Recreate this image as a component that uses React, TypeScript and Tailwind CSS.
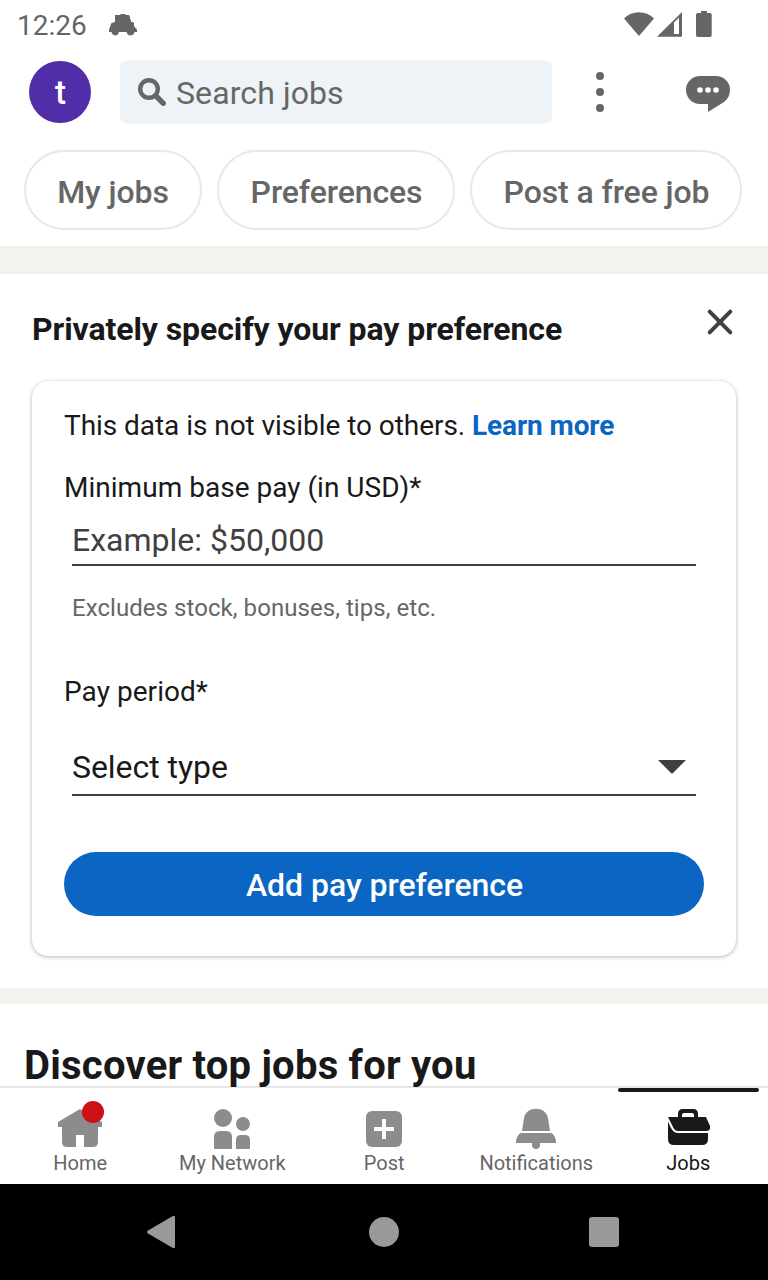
import type { ReactNode } from "react";

function StatusBar() {
  return (
    <div className="flex h-12 items-center pl-[17px] pr-[52px] text-[#666666]">
      <span className="mt-[3px] text-[28px] leading-8">12:26</span>
      <svg className="ml-[22px] h-6 w-7" viewBox="0 0 28 24" fill="currentColor">
        <path d="M6 3h5l1-1h4l1 1h3l1 2v2l1 1v2h2l1 1v3l1 1v1h1l1 2v2h-2.500q-.5 3-4 3.500-3 0-4-3.500H10q-1 3.500-4 3.500-3-.5-3.500-3.500H0v-2.500L2.500 11 6 10z" />
      </svg>
      <svg className="ml-auto h-8 w-[92px]" viewBox="0 0 92 32" fill="currentColor">
        <path d="M15 28 0 10.500C8 2 22 2 30 10.500z" />
        <path fillRule="evenodd" d="M33 28.700 58 4v24.700zM50 14.500v11.500h5V9.500z" />
        <path d="M77 3h6v2h3q1.700 0 1.700 1.700V27.300q0 1.700-1.700 1.700H73.700Q72 29 72 27.300V6.700Q72 5 73.700 5H77z" />
      </svg>
    </div>
  );
}

function Header() {
  return (
    <header className="flex h-[102px] items-start pt-3">
      <div className="ml-[29px] mt-px flex size-[62px] items-center justify-center rounded-full bg-[#512da8] pl-px text-[33px] font-medium leading-none text-white">
        <span>t</span>
      </div>
      <div className="ml-[29px] flex h-16 w-[432px] items-center rounded-lg bg-[#edf3f7] pl-[18px] text-[#666666]">
        <svg className="size-7" viewBox="0 0 28 28" fill="none" stroke="currentColor">
          <circle cx="11" cy="11" r="8.800" strokeWidth="4.400" />
          <path d="m17.500 17.500 7.800 7.800" strokeWidth="5.400" strokeLinecap="round" />
        </svg>
        <span className="ml-[10px] mt-[2px] text-[32px] leading-10 tracking-[0.1px]">Search jobs</span>
      </div>
      <svg className="ml-11 mt-3 h-10 w-2" viewBox="0 0 8 40" fill="#666666">
        <circle cx="4" cy="4" r="4" />
        <circle cx="4" cy="20" r="4" />
        <circle cx="4" cy="36" r="4" />
      </svg>
      <svg className="ml-[82px] mt-4 h-9 w-11" viewBox="0 0 44 36">
        <path d="M14 0h16a14 14 0 0 1 14 14c0 5-2 9-6 12L22 36v-8h-8a14 14 0 0 1 0-28z" fill="#666666" />
        <g fill="#fff">
          <circle cx="14" cy="14" r="2.800" />
          <circle cx="22" cy="14" r="2.800" />
          <circle cx="30" cy="14" r="2.800" />
        </g>
      </svg>
    </header>
  );
}

function Chip({ children, className }: { children: ReactNode; className: string }) {
  return (
    <button
      className={`flex h-20 shrink-0 items-center justify-center rounded-full border-2 border-[#e8e8e8] pt-1 text-[32px] font-medium leading-10 tracking-[-0.1px] text-[#666666] ${className}`}
    >
      {children}
    </button>
  );
}

function PayCard() {
  return (
    <section className="h-[714px] px-8">
      <div className="flex h-[107px] items-start justify-between">
        <h2 className="mt-[35px] text-[32px] font-bold leading-10 tracking-[-0.08px] text-[#191919]">
          Privately specify your pay preference
        </h2>
        <svg className="mr-1 mt-9 size-6 overflow-visible" viewBox="0 0 24 24" fill="none" stroke="#404040" strokeWidth="4">
          <path d="m1.700 1.700 20.600 20.600M22.300 1.700 1.700 22.300" strokeLinecap="round" />
        </svg>
      </div>
      <div className="h-[575px] rounded-2xl px-8 pt-[29px] text-[#191919] shadow-[0_1px_4px_rgba(0,0,0,0.28),0_0_1px_rgba(0,0,0,0.12)]">
        <p className="text-[28px] leading-8 tracking-[-0.05px]">
          This data is not visible to others.{" "}
          <a className="font-bold tracking-[-0.12px] text-[#0a66c2]">Learn more</a>
        </p>
        <label className="mt-[30px] block text-[28px] leading-8 tracking-[0.02px]">Minimum base pay (in USD)*</label>
        <div className="mx-2 mt-4 h-[46px] border-b-2 border-[#404040] text-[32px] leading-10 text-[#404040]">
          Example: $50,000
        </div>
        <p className="mx-2 mt-[26px] text-2xl leading-8 tracking-[0.06px] text-[#666666]">
          Excludes stock, bonuses, tips, etc.
        </p>
        <label className="mt-[52px] block text-[28px] leading-8 tracking-[0.05px]">Pay period*</label>
        <div className="mx-2 mt-[39px] flex h-[49px] justify-between border-b-2 border-[#404040] pr-[10px]">
          <span className="text-[32px] leading-10 tracking-[-0.05px]">Select type</span>
          <svg className="mt-[13px] h-[14px] w-7" viewBox="0 0 28 14" fill="#404040">
            <path d="M0 0h28L14 14z" />
          </svg>
        </div>
        <button className="mt-14 flex h-16 w-full items-center justify-center rounded-full bg-[#0a66c2] pl-px pt-[2px] text-[32px] font-medium leading-10 tracking-[-0.04px] text-white">
          Add pay preference
        </button>
      </div>
    </section>
  );
}

function NavItem({ label, active = false, children }: { label: string; active?: boolean; children: ReactNode }) {
  return (
    <div className={`flex w-[152px] flex-col items-center ${active ? "text-[#191919]" : "text-[#666666]"}`}>
      <div className={`h-1 w-[141px] rounded-sm ${active ? "bg-[#191919]" : ""}`} />
      <svg className={`mt-2 h-[52px] w-12 ${active ? "text-[#191919]" : "text-[#8c8c8c]"}`} viewBox="0 0 48 52" fill="currentColor">
        {children}
      </svg>
      <span className="-mt-px pl-[0.5px] text-xl leading-6">{label}</span>
    </div>
  );
}

function BottomNav() {
  return (
    <nav className="relative flex h-24 shrink-0 justify-center bg-white">
      <NavItem label="Home">
        <path d="M24 9 46 22v5h-4v15q0 5-5 5h-9V35h-8v12h-9q-5 0-5-5V27H2v-5z" />
        <circle cx="37" cy="12" r="11" fill="#cc1016" />
      </NavItem>
      <NavItem label="My Network">
        <circle cx="15" cy="18" r="9" />
        <circle cx="35" cy="24" r="7" />
        <path d="M6 49V37q0-6 6-6h6q6 0 6 6v12zM28 49V40q0-5 5-5h4q5 0 5 5v9z" />
      </NavItem>
      <NavItem label="Post">
        <rect x="6" y="11" width="36" height="36" rx="6" />
        <path d="M24 19v20M14 29h20" stroke="#fff" strokeWidth="4" />
      </NavItem>
      <NavItem label="Notifications">
        <path d="M10 31 12 18C14 5.500 34 5.500 36 18l2 13zM8.500 33h31q4.500 3 4.500 10h-16v2a4 4 0 0 1-8 0v-2H4q0-7 4.500-10z" />
      </NavItem>
      <NavItem label="Jobs" active>
        <path fillRule="evenodd" d="M14 17v-3q0-5 5-5h10q5 0 5 5v3h8l4 9q1 5-4 5H14q-3 0-4.500-3L4 17zM18 17h12v-2q0-2-2-2h-8q-2 0-2 2z" />
        <path d="M4 21.500 7 28q2.500 5 7 5h30v6q0 6-6 6H10q-6 0-6-6z" />
      </NavItem>
    </nav>
  );
}

function SystemNav() {
  return (
    <div className="flex h-24 shrink-0 items-center bg-black pl-[147px] pr-[149px] text-[#999999]">
      <svg className="h-8 w-7" viewBox="0 0 28 32" fill="currentColor">
        <path d="M1 14.500 25 .5q3-1.500 3 1v29q0 2.500-3 1l-24-14q-2-1.500 0-3z" />
      </svg>
      <div className="ml-[194px] size-[30px] rounded-full bg-[#999999]" />
      <div className="ml-auto size-[30px] rounded-[3px] bg-[#999999]" />
    </div>
  );
}

export default function App() {
  return (
    <div className="flex h-[1280px] w-[768px] flex-col overflow-hidden bg-white font-['Roboto',sans-serif]">
      <StatusBar />
      <Header />
      <div className="flex h-24 shrink-0 gap-[15px] pl-6">
        <Chip className="w-[178px]">My jobs</Chip>
        <Chip className="w-[238px] pl-px">Preferences</Chip>
        <Chip className="w-[272px] pl-px">Post a free job</Chip>
      </div>
      <div className="h-7 shrink-0 bg-[#f3f2ef]" />
      <PayCard />
      <div className="h-4 shrink-0 bg-[#f3f2ef]" />
      <section className="h-[84px] shrink-0 border-b-2 border-[#e8e8e8] pl-6 pt-[38px]">
        <h2 className="text-[40px] font-bold leading-[48px] tracking-[0.23px] text-[#191919]">
          Discover top jobs for you
        </h2>
      </section>
      <BottomNav />
      <SystemNav />
    </div>
  );
}
